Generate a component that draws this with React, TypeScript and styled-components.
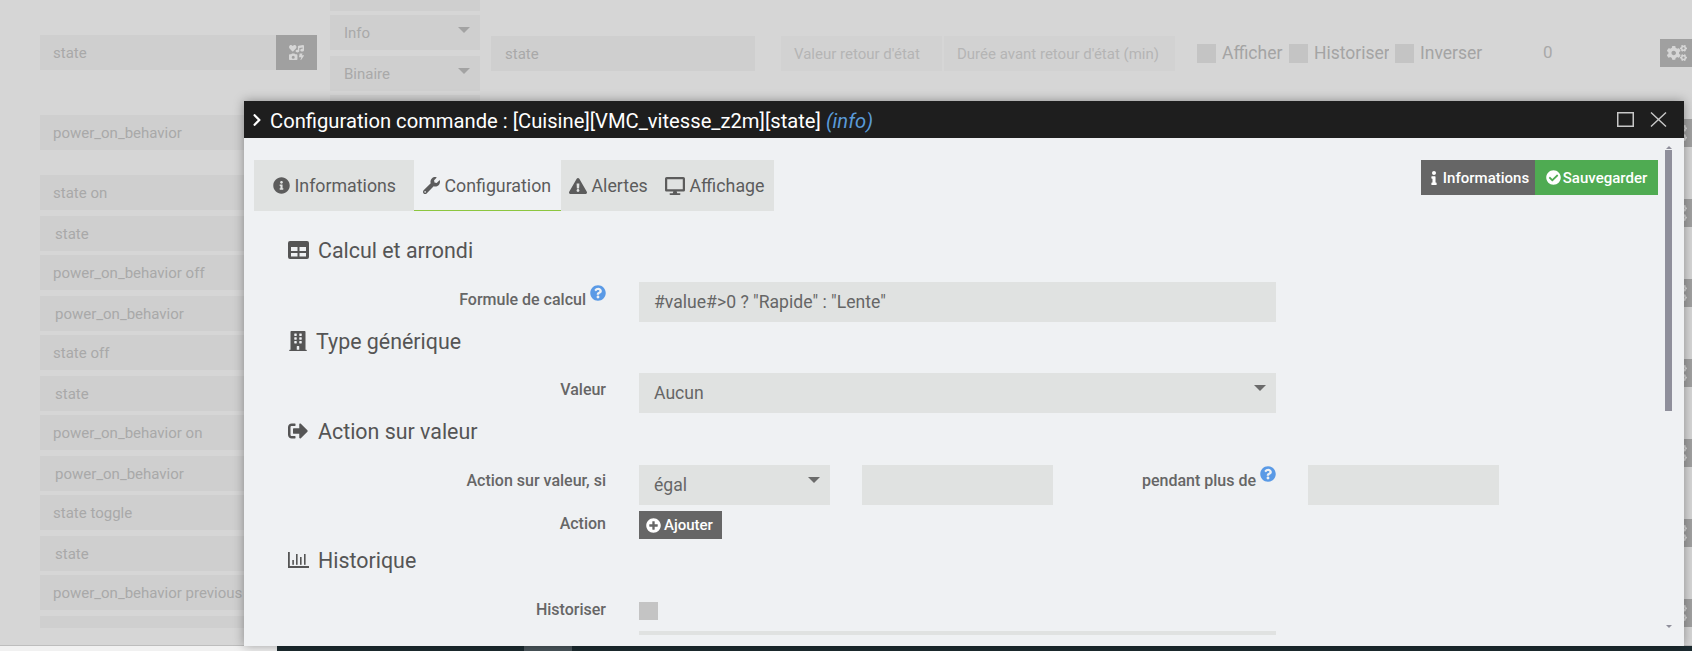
import React from 'react';
import styled, { createGlobalStyle } from 'styled-components';
import {
  FaInfoCircle, FaWrench, FaExclamationTriangle, FaDesktop, FaBuilding, FaSignOutAlt,
  FaInfo, FaCheckCircle, FaPlusCircle, FaQuestionCircle, FaCogs, FaChevronRight, FaIcons,
} from 'react-icons/fa';

const Global = createGlobalStyle`
  html, body { margin: 0; padding: 0; background: #f0f0f0; overflow: hidden; }
  * { box-sizing: border-box; }
  body { font-family: Roboto, "Liberation Sans", sans-serif; }
`;

const Page = styled.div`
  width: 1692px;
  height: 651px;
  position: relative;
  overflow: hidden;
  display: flex;
  flex-direction: column;
`;
const Backdrop = styled.div`
  height: 646px;
  flex: none;
  background: #d6d6d6;
  border-bottom: 1px solid #bdbdbd;
  overflow: hidden;
  display: flex;
  padding-left: 40px;
  color: #a9a9a9;
  font-size: 15px;
`;
const Footer = styled.div`
  flex: 1;
  display: flex;
  background: #1c2b30;
`;
const FooterBlank = styled.div`
  width: 277px;
  background: #f1f1f1;
`;
const FooterTab = styled.div`
  width: 48px;
  margin-left: 247px;
  background: #49555a;
`;
const LeftCol = styled.div`
  width: 277px;
  flex: none;
  padding-top: 35px;
  display: flex;
  flex-direction: column;
`;
const HeadRow = styled.div`
  display: flex;
  height: 35px;
  margin-bottom: 45px;
`;
const NameField = styled.div<{ $sub?: boolean; $cut?: boolean }>`
  flex: none;
  height: ${p => (p.$cut ? '12px' : '35px')};
  margin-top: ${p => (p.$cut ? '6px' : p.$sub ? '6px' : '4px')};
  padding-left: ${p => (p.$sub ? '15px' : '13px')};
  background: #cfcfcf;
  line-height: 36px;
  white-space: nowrap;
  overflow: hidden;
`;
const HeadField = styled(NameField)`
  flex: 1;
  margin-top: 0;
`;
const FirstField = styled(NameField)`
  margin-top: 0;
  margin-bottom: 21px;
`;
const IconBtn = styled.div`
  width: 41px;
  height: 35px;
  background: #a0a0a0;
  color: #d6d6d6;
  display: flex;
  align-items: center;
  justify-content: center;
  font-size: 15px;
`;
const SelectCol = styled.div`
  width: 150px;
  flex: none;
  margin-left: 13px;
  margin-top: -24px;
  display: flex;
  flex-direction: column;
`;
const BgSelect = styled.div<{ $mt?: number }>`
  height: 35px;
  flex: none;
  margin-top: ${p => p.$mt ?? 0}px;
  background: #cfcfcf;
  padding-left: 14px;
  line-height: 37px;
  display: flex;
  justify-content: space-between;
`;
const Caret = styled.span<{ $dark?: boolean }>`
  width: 0;
  height: 0;
  flex: none;
  margin: 12px 10px 0 0;
  border-left: 6px solid transparent;
  border-right: 6px solid transparent;
  border-top: 6px solid ${p => (p.$dark ? '#6b6b6b' : '#a3a3a3')};
`;
const TopCols = styled.div`
  flex: 1;
  display: flex;
  align-items: flex-start;
  padding-top: 36px;
`;
const BgInput = styled.div<{ $w: number; $ml: number; $pl: number; $light?: boolean }>`
  width: ${p => p.$w}px;
  margin-left: ${p => p.$ml}px;
  height: 35px;
  flex: none;
  background: ${p => (p.$light ? '#d2d2d2' : '#cfcfcf')};
  color: ${p => (p.$light ? '#b5b5b5' : '#a9a9a9')};
  padding-left: ${p => p.$pl}px;
  line-height: 36px;
  white-space: nowrap;
  overflow: hidden;
`;
const CheckGroup = styled.div<{ $w: number; $ml: number }>`
  width: ${p => p.$w}px;
  margin-left: ${p => p.$ml}px;
  flex: none;
  margin-top: 8px;
  display: flex;
  gap: 6px;
  font-size: 17.5px;
  color: #a4a4a4;
  line-height: 19px;
  overflow: hidden;
  white-space: nowrap;
`;
const BgCheck = styled.span`
  width: 19px;
  height: 19px;
  flex: none;
  background: #c4c4c4;
`;
const Count = styled.div`
  margin-top: 4px;
  margin-left: 60px;
  font-size: 17px;
  line-height: 24px;
`;
const GearCol = styled.div`
  width: 32px;
  flex: none;
  margin-top: 39px;
  display: flex;
  flex-direction: column;
  gap: 52px;
`;
const GearBtn = styled.div`
  width: 32px;
  height: 28px;
  background: #a0a0a0;
  color: #d6d6d6;
  display: flex;
  align-items: center;
  justify-content: flex-end;
  padding-right: 5px;
  font-size: 20px;
`;

const Modal = styled.div`
  position: absolute;
  left: 244px;
  top: 101px;
  width: 1440px;
  height: 545px;
  background: #eff1f3;
  box-shadow: 0 0 10px rgba(0, 0, 0, 0.35);
  display: flex;
  flex-direction: column;
`;
const TitleBar = styled.div`
  height: 37px;
  flex: none;
  background: #1e1e1e;
  color: #fff;
  display: flex;
  align-items: center;
  padding: 0 17px 0 6px;
`;
const Chevron = styled.span`
  display: flex;
  font-size: 14px;
  width: 20px;
`;
const Title = styled.div`
  flex: 1;
  font-size: 20.2px;
  padding-top: 2px;
  white-space: nowrap;
  em { color: #5a9ad8; }
`;
const WinIcons = styled.div`
  display: flex;
  gap: 16px;
  align-items: center;
`;
const ModalBody = styled.div`
  flex: 1;
  display: flex;
  min-height: 0;
  padding-bottom: 11px;
`;
const Content = styled.div`
  flex: 1;
  min-width: 0;
  overflow: hidden;
  padding: 22px 7px 0 10px;
  color: #555;
`;
const Scroll = styled.div`
  width: 7px;
  margin: 7px 12px 0 0;
  display: flex;
  flex-direction: column;
  align-items: center;
  flex: none;
  height: 490px;
`;
const ScrollUp = styled.span`
  width: 0;
  height: 0;
  border-left: 3px solid transparent;
  border-right: 3px solid transparent;
  border-bottom: 3px solid #8f8f9b;
  margin-top: 1px;
`;
const ScrollDown = styled.span`
  width: 0;
  height: 0;
  border-left: 3px solid transparent;
  border-right: 3px solid transparent;
  border-top: 3px solid #8f8f9b;
  margin-top: 214px;
`;
const Thumb = styled.div`
  width: 7px;
  height: 261px;
  margin-top: 1px;
  background: #8f8f9b;
`;
const TopBar = styled.div`
  display: flex;
  justify-content: space-between;
  align-items: flex-start;
  height: 52px;
`;
const Tabs = styled.div`
  display: flex;
`;
const Tab = styled.div<{ $active?: boolean; $w: number; $pl: number }>`
  width: ${p => p.$w}px;
  height: 51px;
  padding: 1px 0 0 ${p => p.$pl}px;
  display: flex;
  align-items: center;
  gap: 4.5px;
  font-size: 17.8px;
  color: #5c5c5c;
  background: ${p => (p.$active ? 'transparent' : '#e0e2e1')};
  border-bottom: 1px solid ${p => (p.$active ? '#8cc63f' : 'transparent')};
  white-space: nowrap;
  svg { flex: none; }
`;
const Actions = styled.div`
  display: flex;
`;
const ActionBtn = styled.div<{ $green?: boolean; $w: number }>`
  width: ${p => p.$w}px;
  height: 35px;
  background: ${p => (p.$green ? '#4fab52' : '#666')};
  color: #fff;
  display: flex;
  align-items: center;
  justify-content: center;
  gap: 2px;
  font-size: 15px;
  font-weight: 500;
`;
const Heading = styled.div<{ $mt: number; $gap?: number }>`
  height: 30px;
  margin-top: ${p => p.$mt}px;
  padding-left: 34px;
  display: flex;
  align-items: center;
  gap: ${p => p.$gap ?? 9}px;
  font-size: 21.4px;
  color: #555;
`;
const FormRow = styled.div<{ $mt: number; $h?: number }>`
  display: flex;
  align-items: center;
  margin-top: ${p => p.$mt}px;
  height: ${p => p.$h ?? 40}px;
`;
const Label = styled.div<{ $w?: number; $mr?: number; $pb?: number }>`
  width: ${p => p.$w ?? 352}px;
  margin-right: ${p => p.$mr ?? 33}px;
  padding-bottom: ${p => p.$pb ?? 4}px;
  flex: none;
  text-align: right;
  font-size: 16px;
  font-weight: 500;
  color: #666;
  white-space: nowrap;
`;
const Help = styled.span`
  color: #5a9ae6;
  font-size: 16px;
  position: relative;
  top: -7px;
  margin-left: 4px;
  svg { vertical-align: middle; }
`;
const Input = styled.div<{ $w: number; $ml?: number }>`
  width: ${p => p.$w}px;
  margin-left: ${p => p.$ml ?? 0}px;
  height: 40px;
  flex: none;
  background: #e0e2e1;
  color: #666;
  font-size: 17.6px;
  padding-left: 15px;
  line-height: 40px;
`;
const SelectBox = styled(Input)`
  display: flex;
  justify-content: space-between;
  line-height: 41px;
`;
const AddBtn = styled.div`
  width: 83px;
  height: 28px;
  background: #666;
  color: #fff;
  display: flex;
  align-items: center;
  gap: 3px;
  padding-left: 7px;
  font-size: 15px;
  font-weight: 500;
`;
const Check = styled.span`
  width: 19px;
  height: 18px;
  background: #c4c4c4;
`;

const rows: [string, boolean][] = [
  ['state on', false], ['state', true], ['power_on_behavior off', false], ['power_on_behavior', true],
  ['state off', false], ['state', true], ['power_on_behavior on', false], ['power_on_behavior', true],
  ['state toggle', false], ['state', true], ['power_on_behavior previous', false],
];

const TableIcon = () => (
  <svg width="21" height="18" viewBox="0 0 21 18">
    <path
      fill="#555"
      fillRule="evenodd"
      d="M2 0h17a2 2 0 0 1 2 2v14a2 2 0 0 1-2 2H2a2 2 0 0 1-2-2V2a2 2 0 0 1 2-2zM3 6v4h6.5V6zM11.5 6v4H18V6zM3 12v3.5h6.5V12zM11.5 12v3.5H18V12z"
    />
  </svg>
);

const BarsIcon = () => (
  <svg width="21" height="16" viewBox="0 0 21 16" fill="#555">
    <rect x="0" y="0" width="1.8" height="16" />
    <rect x="0" y="14" width="21" height="2" />
    <rect x="4.3" y="8" width="1.6" height="4.8" />
    <rect x="8" y="2" width="1.6" height="10.8" />
    <rect x="12" y="5" width="1.6" height="7.8" />
    <rect x="16" y="2" width="1.6" height="10.8" />
  </svg>
);

export default function App() {
  return (
    <Page>
      <Global />
      <Backdrop>
        <LeftCol>
          <HeadRow>
            <HeadField>state</HeadField>
            <IconBtn><FaIcons /></IconBtn>
          </HeadRow>
          <FirstField>power_on_behavior</FirstField>
          {rows.map(([t, sub], i) => (
            <NameField key={i} $sub={sub}>{t}</NameField>
          ))}
          <NameField $cut />
        </LeftCol>
        <SelectCol>
          <BgSelect />
          <BgSelect $mt={4}>Info<Caret /></BgSelect>
          <BgSelect $mt={6}>Binaire<Caret /></BgSelect>
          <BgSelect $mt={4} />
        </SelectCol>
        <TopCols>
          <BgInput $w={264} $ml={11} $pl={14}>state</BgInput>
          <BgInput $w={161} $ml={26} $pl={13} $light>Valeur retour d'état</BgInput>
          <BgInput $w={231} $ml={2} $pl={13} $light>Durée avant retour d'état (min)</BgInput>
          <CheckGroup $w={86} $ml={22}><BgCheck />Afficher</CheckGroup>
          <CheckGroup $w={100} $ml={6}><BgCheck />Historiser</CheckGroup>
          <CheckGroup $w={88} $ml={6}><BgCheck />Inverser</CheckGroup>
          <Count>0</Count>
        </TopCols>
        <GearCol>
          {[...Array(8)].map((_, i) => (
            <GearBtn key={i}><FaCogs /></GearBtn>
          ))}
        </GearCol>
      </Backdrop>
      <Footer>
        <FooterBlank />
        <FooterTab />
      </Footer>
      <Modal>
        <TitleBar>
          <Chevron><FaChevronRight /></Chevron>
          <Title>Configuration commande : [Cuisine][VMC_vitesse_z2m][state] <em>(info)</em></Title>
          <WinIcons>
            <svg width="17" height="15" viewBox="0 0 17 15" fill="none" stroke="#c8c8c8" strokeWidth="1.5">
              <rect x="0.75" y="0.75" width="15.5" height="13.5" />
            </svg>
            <svg width="17" height="15" viewBox="0 0 17 15" fill="none" stroke="#c8c8c8" strokeWidth="1.4">
              <path d="M1 0.5 L16 14.5 M16 0.5 L1 14.5" />
            </svg>
          </WinIcons>
        </TitleBar>
        <ModalBody>
          <Content>
            <TopBar>
              <Tabs>
                <Tab $w={160} $pl={19}><FaInfoCircle size={17} />Informations</Tab>
                <Tab $w={147} $pl={9} $active><FaWrench size={17} />Configuration</Tab>
                <Tab $w={96} $pl={8}><FaExclamationTriangle size={18} />Alertes</Tab>
                <Tab $w={117} $pl={8}><FaDesktop size={20} />Affichage</Tab>
              </Tabs>
              <Actions>
                <ActionBtn $w={114}><FaInfo size={14} />Informations</ActionBtn>
                <ActionBtn $w={123} $green><FaCheckCircle size={15} />Sauvegarder</ActionBtn>
              </Actions>
            </TopBar>
            <Heading $mt={23}><TableIcon />Calcul et arrondi</Heading>
            <FormRow $mt={17}>
              <Label $pb={6}>Formule de calcul<Help><FaQuestionCircle /></Help></Label>
              <Input $w={637}>#value#&gt;0 ? "Rapide" : "Lente"</Input>
            </FormRow>
            <Heading $mt={4} $gap={8}><FaBuilding size={20} />Type générique</Heading>
            <FormRow $mt={17}>
              <Label $pb={8}>Valeur</Label>
              <SelectBox $w={637}>Aucun<Caret $dark /></SelectBox>
            </FormRow>
            <Heading $mt={3} $gap={10}><FaSignOutAlt size={20} />Action sur valeur</Heading>
            <FormRow $mt={19}>
              <Label $pb={10}>Action sur valeur, si</Label>
              <SelectBox $w={191}>égal<Caret $dark /></SelectBox>
              <Input $w={191} $ml={32} />
              <Label $w={223} $mr={32} $pb={10}>pendant plus de<Help><FaQuestionCircle /></Help></Label>
              <Input $w={191} />
            </FormRow>
            <FormRow $mt={6} $h={28}>
              <Label>Action</Label>
              <AddBtn><FaPlusCircle size={15} />Ajouter</AddBtn>
            </FormRow>
            <Heading $mt={6}><BarsIcon />Historique</Heading>
            <FormRow $mt={27} $h={18}>
              <Label>Historiser</Label>
              <Check />
            </FormRow>
            <FormRow $mt={11}>
              <Label><Help><FaQuestionCircle /></Help></Label>
              <Input $w={637} />
            </FormRow>
          </Content>
          <Scroll>
            <ScrollUp />
            <Thumb />
            <ScrollDown />
          </Scroll>
        </ModalBody>
      </Modal>
    </Page>
  );
}
